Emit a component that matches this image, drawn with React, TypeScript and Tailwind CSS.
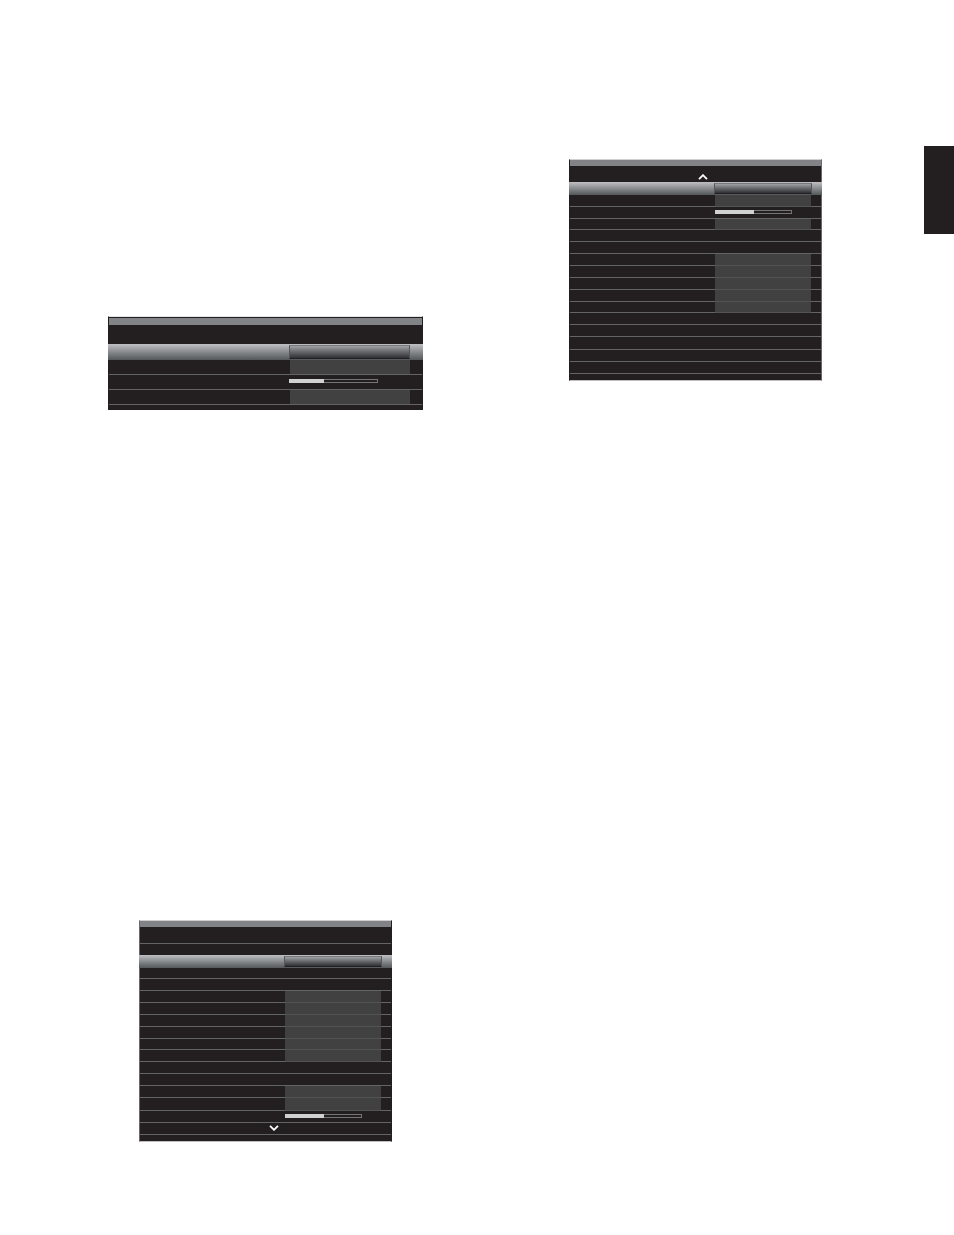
import type { ReactNode } from "react";
import clsx from "clsx";

type Kind = "blank" | "value" | "slider" | "more";
type Row = { kind: Kind; height?: "short" | "tall" };

const repeat = (kind: Kind, count: number): Row[] =>
  Array.from({ length: count }, () => ({ kind }));

const AUDIO_ROWS: Row[] = [{ kind: "value" }, { kind: "slider" }, { kind: "value" }];

const UPPER_ROWS: Row[] = [
  { kind: "blank", height: "short" },
  { kind: "blank" },
  ...repeat("value", 4),
  { kind: "value", height: "short" },
  { kind: "value" },
  ...repeat("blank", 2),
  { kind: "value" },
  { kind: "value", height: "tall" },
  { kind: "slider" },
  { kind: "more" },
];

const LOWER_ROWS: Row[] = [
  { kind: "value" },
  { kind: "slider" },
  { kind: "value", height: "short" },
  ...repeat("blank", 2),
  ...repeat("value", 4),
  { kind: "value", height: "short" },
  ...repeat("blank", 2),
  { kind: "blank", height: "tall" },
  ...repeat("blank", 2),
];

function Chevron({ up }: { up?: boolean }) {
  return (
    <svg viewBox="0 0 10 6" className="h-1.5 w-2.5" fill="none" stroke="white" strokeWidth="1.8">
      <path d={up ? "M1 5.2 5 1.2 9 5.2" : "M1 0.8 5 4.8 9 0.8"} />
    </svg>
  );
}

function Level({ value, className }: { value: number; className: string }) {
  return (
    <input
      type="range"
      aria-label="Level"
      defaultValue={value}
      className={clsx(
        "block h-1 appearance-none border border-transparent [&::-webkit-slider-thumb]:h-0 [&::-webkit-slider-thumb]:w-0 [&::-webkit-slider-thumb]:appearance-none",
        className,
      )}
      // filled part over the dark groove over the grey frame
      style={{
        background: `linear-gradient(to right, #d0d2d1 ${value}%, transparent ${value}%) border-box, linear-gradient(#231f20, #231f20) padding-box, linear-gradient(#747474, #747474) border-box`,
      }}
    />
  );
}

function Selected({ wide }: { wide?: boolean }) {
  return (
    <div
      className={clsx(
        "-mx-px flex justify-end bg-linear-to-b from-[#c0c0c4] to-[#54585a] py-px",
        wide ? "h-4 pr-[13px]" : "h-[13px] pr-2.5",
      )}
    >
      <button
        type="button"
        aria-label="Selected value"
        className={clsx(
          "border border-[#55565a] border-t-[#77787c] border-b-[#231f20] bg-linear-to-b from-[#a0a1a5] to-[#303134]",
          wide ? "w-[121px]" : "w-[98px]",
        )}
      />
    </div>
  );
}

function MenuRow({ row, wide }: { row: Row; wide?: boolean }) {
  return (
    <li
      className={clsx(
        "flex border-b border-[#636466]",
        row.kind === "more" ? "justify-center" : "justify-end",
        wide ? "h-[15px] pr-3" : "pr-2.5",
        !wide && (row.height === "short" ? "h-[11px]" : row.height === "tall" ? "h-[13px]" : "h-3"),
      )}
    >
      {row.kind === "value" && (
        <button
          type="button"
          aria-label="Value"
          className={clsx("bg-[#414141]", wide ? "w-[120px]" : "w-24 shadow-[0_1px_0_#535353]")}
        />
      )}
      {row.kind === "slider" && (
        <div className={clsx("flex", wide ? "w-[121px] pt-1" : "w-24 pt-[3px]")}>
          <Level value={wide ? 39 : 51} className={wide ? "w-[89px]" : "w-[77px]"} />
        </div>
      )}
      {row.kind === "more" && (
        <div className="pt-0.5 pl-7">
          <Chevron />
        </div>
      )}
    </li>
  );
}

function Menu({
  rows,
  header,
  wide,
  className,
}: {
  rows: Row[];
  header: ReactNode;
  wide?: boolean;
  className: string;
}) {
  return (
    <section
      className={clsx(
        "w-full border-x border-t bg-[#231f20]",
        wide
          ? "max-w-[315px] border-t-[#e5e5e5] pb-[5px]"
          : "max-w-[253px] border-b border-t-[#d0d0d0] border-b-[#c0c0c0] pb-1.5",
        className,
      )}
    >
      <div className={clsx("bg-[#828386]", wide ? "mt-px h-[7px]" : "h-1.5")} />
      {header}
      <Selected wide={wide} />
      <ul>
        {rows.map((row, i) => (
          <MenuRow key={i} row={row} wide={wide} />
        ))}
      </ul>
    </section>
  );
}

export default function App() {
  return (
    <div className="flex min-h-screen bg-white">
      <main className="grid flex-1 grid-cols-2 items-start pr-[13px] pl-[50px]">
        <div className="flex flex-col items-center pt-[316px] pb-[93px]">
          <Menu wide rows={AUDIO_ROWS} header={<div className="h-[19px]" />} className="border-x-[#231f20]" />
          <Menu
            rows={UPPER_ROWS}
            header={
              <>
                <div className="h-[17px] border-b border-[#636466]" />
                <div className="h-[11px]" />
              </>
            }
            className="mt-[510px] border-r-[#231f20] border-l-[#6a6a6c]"
          />
        </div>
        <div className="flex justify-center pt-[159px]">
          <Menu
            rows={LOWER_ROWS}
            header={
              <div className="flex h-4 items-end justify-center pb-0.5 pl-3.5">
                <Chevron up />
              </div>
            }
            className="border-r-[#6a6a6c] border-l-[#231f20]"
          />
        </div>
      </main>
      <aside className="mt-[146px] h-[88px] w-[30px] bg-[#231f20]" />
    </div>
  );
}
